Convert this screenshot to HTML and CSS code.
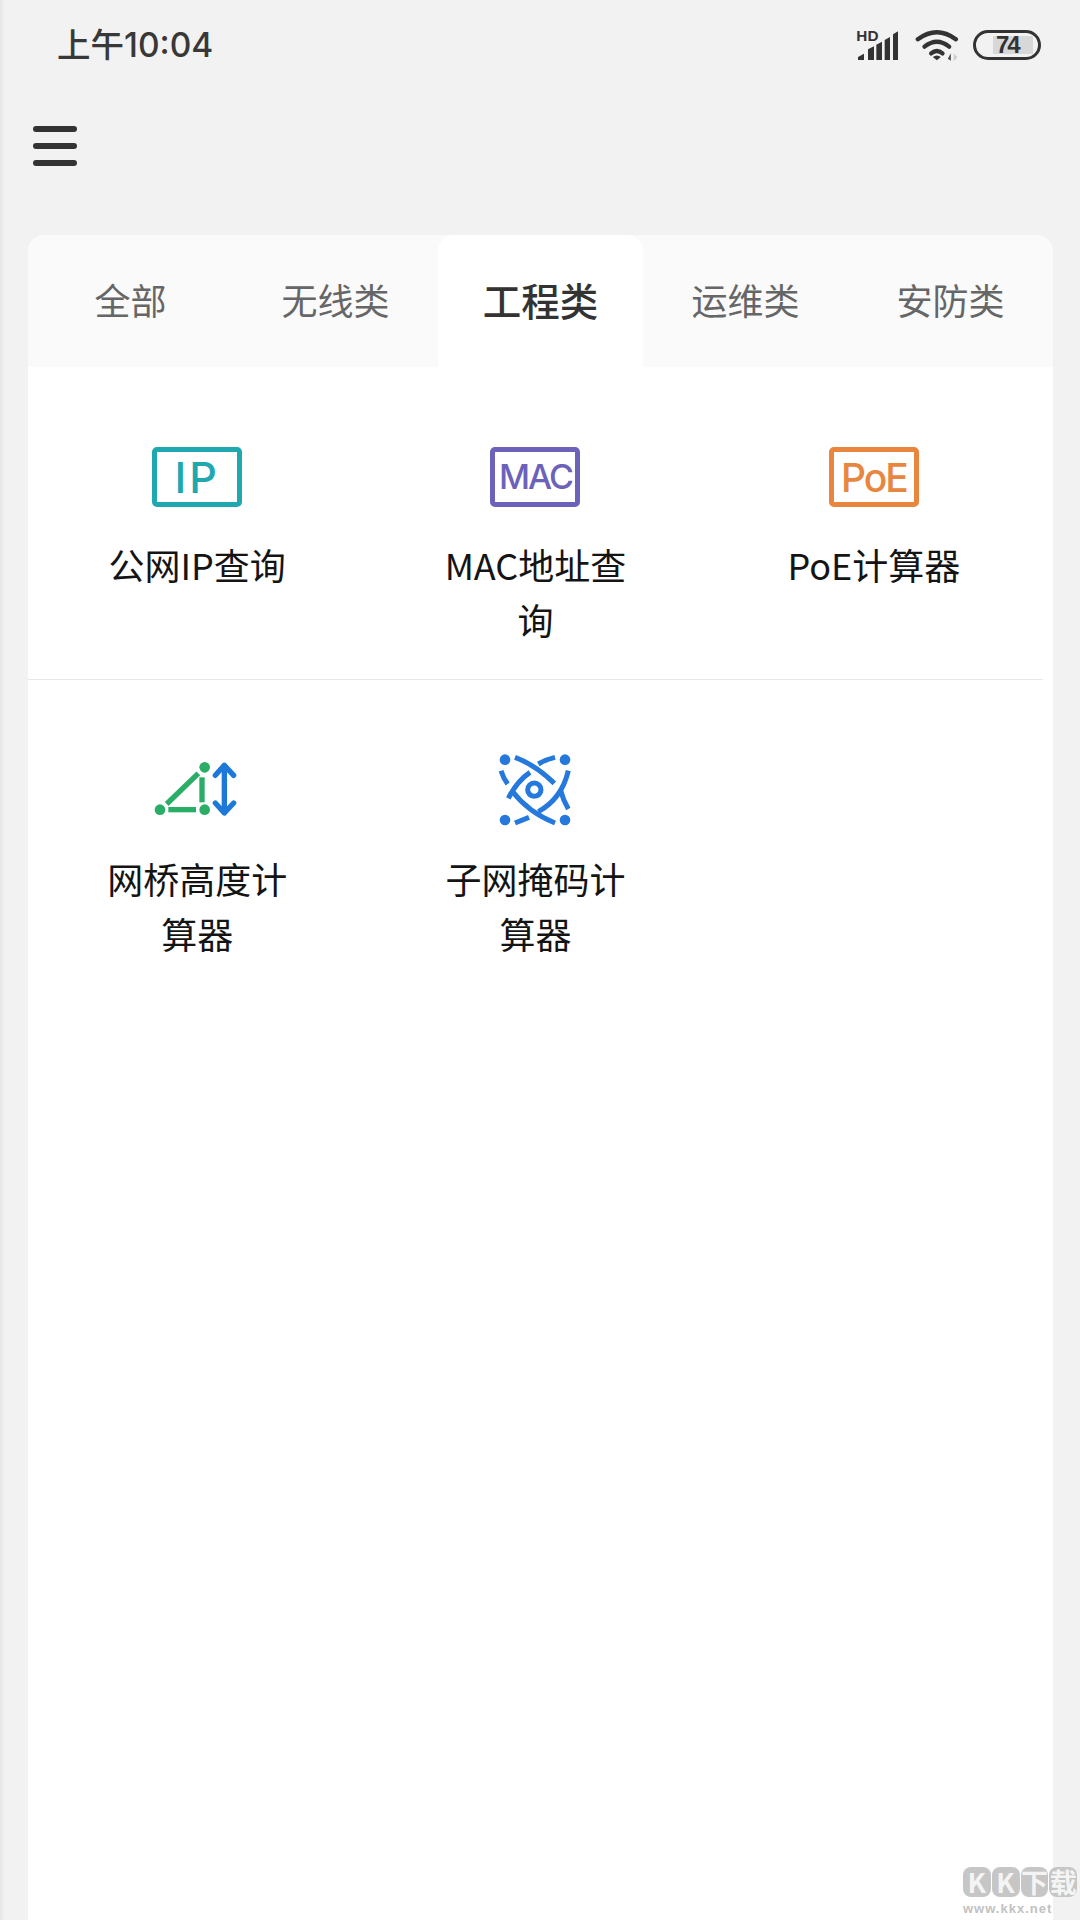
FILE: index.html
```html
<!DOCTYPE html>
<html lang="zh-CN">

<head>
    <meta charset="UTF-8">
    <meta name="viewport" content="width=device-width, initial-scale=1.0">
    <title>工具</title>
    <link rel="stylesheet" href="styles.css">
</head>

<body>
    <div class="page">
        <div class="statusbar">
            <span class="time">上午10:04</span>
            <div class="status-icons">
                <svg class="icon-signal" viewBox="105 75 150 111">
                    <text x="112" y="119" class="hd">HD</text>
                    <path d="M117 177v-9l18-10v19zM147 177v-32l18-9v41zM172 177v-46l17-9v55zM197 177v-60l16-9v69zM222 177v-77l15-9v86z" fill="#333" />
                </svg>
                <svg class="icon-wifi" viewBox="280 78 140 111">
                    <g fill="none" stroke="#333" stroke-width="13" stroke-linecap="round">
                        <path d="M291 118Q348 76 405 118" />
                        <path d="M311 140Q348 110 385 140" />
                        <path d="M331 160Q348 146 365 160" />
                    </g>
                    <path d="M336 171Q348 162 360 171L348 181z" fill="#333" />
                    <path d="M390 160v22l-9-6z" fill="#444" />
                    <path d="M399 160l10 12-10 12z" fill="#ccc" />
                </svg>
                <div class="battery">
                    <div class="battery-level">74</div>
                </div>
            </div>
        </div>

        <div class="toolbar">
            <div class="menu-btn">
                <span></span>
                <span></span>
                <span></span>
            </div>
        </div>

        <div class="card">
            <div class="tabs">
                <div class="tab">全部</div>
                <div class="tab">无线类</div>
                <div class="tab active">工程类</div>
                <div class="tab">运维类</div>
                <div class="tab">安防类</div>
            </div>

            <div class="tool-row first">
                <div class="tool">
                    <div class="badge badge-ip">IP</div>
                    <div class="tool-name">公网IP查询</div>
                </div>
                <div class="tool">
                    <div class="badge badge-mac">MAC</div>
                    <div class="tool-name">MAC地址查询</div>
                </div>
                <div class="tool">
                    <div class="badge badge-poe">PoE</div>
                    <div class="tool-name">PoE计算器</div>
                </div>
            </div>

            <div class="tool-row second">
                <div class="tool">
                    <svg class="tool-icon" viewBox="36 51 270 180">
                        <g fill="#2aad66">
                            <circle cx="194" cy="70" r="16" />
                            <circle cx="60" cy="197" r="16" />
                            <circle cx="194" cy="197" r="16" />
                        </g>
                        <g fill="none" stroke="#2aad66" stroke-width="16">
                            <path d="M175 88L80 180" />
                            <path d="M186 100V175" />
                            <path d="M85 197H168" />
                        </g>
                        <g fill="none" stroke="#1e78d8" stroke-width="16" stroke-linecap="round" stroke-linejoin="round">
                            <path d="M253 65V205" />
                            <path d="M226 94L253 64L281 94" />
                            <path d="M226 177L253 207L281 177" />
                        </g>
                    </svg>
                    <div class="tool-name">网桥高度计算器</div>
                </div>
                <div class="tool">
                    <svg class="tool-icon" viewBox="30 51 270 180">
                        <g fill="#2578dc">
                            <circle cx="75" cy="47" r="16" />
                            <circle cx="255" cy="47" r="16" />
                            <circle cx="75" cy="228" r="16" />
                            <circle cx="255" cy="228" r="16" />
                        </g>
                        <circle cx="163" cy="137" r="20" fill="none" stroke="#2578dc" stroke-width="15" />
                        <g fill="none" stroke="#2578dc" stroke-width="15">
                            <path d="M105 40Q165 62 223 118" />
                            <path d="M225 40Q198 46 175 60" />
                            <path d="M150 85Q110 112 85 163" />
                            <path d="M63 80Q70 102 83 120" />
                            <path d="M97 142Q145 205 225 237" />
                            <path d="M105 237L147 220" />
                            <path d="M175 203Q245 165 265 80" />
                            <path d="M242 140Q250 170 265 195" />
                        </g>
                    </svg>
                    <div class="tool-name">子网掩码计算器</div>
                </div>
            </div>
        </div>

        <div class="watermark">
            <div class="wm-tiles">
                <span>K</span>
                <span>K</span>
                <span>下</span>
                <span>载</span>
            </div>
            <div class="wm-url">www.kkx.net</div>
        </div>
    </div>
</body>

</html>
```

FILE: styles.css
```css
* {
    box-sizing: border-box;
}

body {
    margin: 0;
    font-family: "Noto Sans CJK SC", "Noto Sans", sans-serif;
}

.page {
    position: relative;
    display: flex;
    flex-direction: column;
    width: 1080px;
    height: 1920px;
    overflow: hidden;
    background: linear-gradient(to right, #e6e6e6, #f2f2f2 5px);
}

/* status bar */
.statusbar {
    display: flex;
    justify-content: space-between;
    align-items: flex-start;
    height: 92px;
    padding: 25px 39px 0 57px;
}

.time {
    margin-top: -1px;
    font-family: Inter, "Noto Sans CJK SC", sans-serif;
    font-size: 33.5px;
    font-weight: 500;
    line-height: 42px;
    color: #383838;
}

.status-icons {
    display: flex;
    align-items: center;
    gap: 10px;
    padding-top: 1px;
}

.icon-signal {
    width: 50px;
    height: 37px;
}

.hd {
    font-family: "Liberation Sans", sans-serif;
    font-size: 46px;
    font-weight: bold;
    fill: #333;
}

.icon-wifi {
    width: 47px;
    height: 37px;
}

.battery {
    display: flex;
    align-items: center;
    width: 68px;
    height: 30px;
    margin-left: 2px;
    padding-left: 17px;
    border: 3px solid #333;
    border-radius: 15px;
}

.battery-level {
    width: 40px;
    height: 18px;
    padding-left: 3px;
    background-color: #d8d8d8;
    font-family: "Liberation Sans", sans-serif;
    font-size: 24px;
    font-weight: bold;
    line-height: 18px;
    letter-spacing: -2px;
    color: #333;
}

/* toolbar */
.toolbar {
    height: 143px;
    padding: 34px 0 0 33px;
}

.menu-btn {
    display: flex;
    flex-direction: column;
    gap: 11px;
    width: 44px;
}

.menu-btn span {
    height: 6px;
    border-radius: 3px;
    background-color: #333;
}

/* card */
.card {
    flex: 1;
    width: 1025px;
    margin-left: 28px;
    border-radius: 16px 16px 0 0;
    background-color: #fff;
}

.tabs {
    display: grid;
    grid-template-columns: repeat(5, 1fr);
    height: 132px;
    border-radius: 16px 16px 0 0;
    background-color: #fafafa;
}

.tab {
    display: flex;
    justify-content: center;
    align-items: center;
    padding-bottom: 4px;
    font-size: 36px;
    color: #666;
}

.tab.active {
    border-radius: 16px 16px 0 0;
    background-color: #fff;
    font-size: 38.5px;
    font-weight: 500;
    color: #333;
}

.tool-row {
    display: grid;
    grid-template-columns: repeat(3, 1fr);
    width: 1015px;
}

.tool-row.first {
    height: 313px;
    padding-top: 80px;
    border-bottom: 1px solid #e8e8e8;
}

.tool-row.second {
    padding-top: 81px;
}

.tool {
    display: flex;
    flex-direction: column;
    align-items: center;
}

.badge {
    display: flex;
    justify-content: center;
    align-items: center;
    width: 90px;
    height: 60px;
    border: 5px solid;
    border-radius: 5px;
    font-family: Inter, "Noto Sans", sans-serif;
    font-weight: 500;
    line-height: 1;
}

.badge-ip {
    border-color: #1fa8b0;
    font-size: 43px;
    letter-spacing: 3px;
    color: #1fa8b0;
}

.badge-mac {
    border-color: #6c62ba;
    font-size: 34px;
    letter-spacing: -2px;
    color: #6c62ba;
}

.badge-poe {
    border-color: #e8853f;
    font-size: 39px;
    letter-spacing: -2px;
    color: #e8853f;
}

.tool-icon {
    width: 90px;
    height: 60px;
    overflow: visible;
}

.tool-name {
    width: 190px;
    margin-top: 30px;
    font-size: 36px;
    line-height: 55px;
    text-align: center;
    color: #141414;
}

/* watermark over the corner */
.watermark {
    position: absolute;
    right: 3px;
    bottom: 4px;
    width: 114px;
}

.wm-tiles {
    display: flex;
    gap: 1px;
}

.wm-tiles span {
    width: 28px;
    height: 30px;
    border-radius: 8px;
    background-color: #c6c6c6;
    font-family: "Noto Sans CJK SC", sans-serif;
    font-size: 27px;
    font-weight: bold;
    line-height: 30px;
    text-align: center;
    color: #f4f4f4;
}

.wm-url {
    margin-top: 4px;
    font-family: "Liberation Sans", sans-serif;
    font-size: 13px;
    font-weight: bold;
    line-height: 15px;
    letter-spacing: 1px;
    color: #c2c2c2;
}
```
